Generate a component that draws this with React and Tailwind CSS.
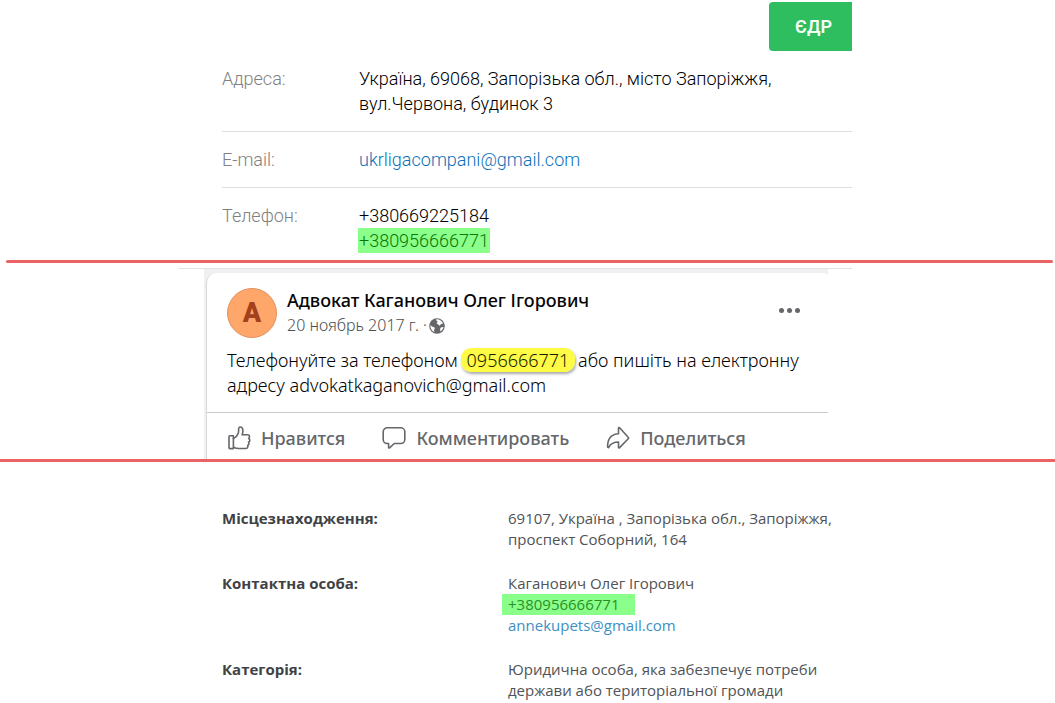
import clsx from "clsx";

// Red separator between the three sources
function Divider({ inset }) {
  return (
    <div
      className={clsx("h-[3px] bg-[#ea6262]", inset && "ml-[6px] mr-[2px] rounded-full")}
    />
  );
}

function RegistryRow({ label, last, children }) {
  return (
    <div className={clsx("flex pt-[15px]", !last && "border-b border-[#dedede] pb-[15px]")}>
      <dt className="w-[137px] shrink-0 text-[#808080]">{label}</dt>
      <dd className="text-black">{children}</dd>
    </div>
  );
}

function ContactRow({ label, children }) {
  return (
    <div className="flex">
      <dt className="w-[286px] shrink-0 font-bold text-[#3f4245]">{label}</dt>
      <dd className="text-[#505356]">{children}</dd>
    </div>
  );
}

function LikeIcon() {
  return (
    <svg viewBox="0 0 24 24" className="size-6" fill="none" stroke="#65676b" strokeWidth="1.6" strokeLinejoin="round" strokeLinecap="round">
      <path d="M2.8 9.8h3.600v12.800H2.800a.8.8 0 0 1-.8-.8V10.600a.8.8 0 0 1 .8-.8z" />
      <path d="M6.4 12.600C8.900 11.200 10.600 9.400 11.300 7.200c.5-1.600.2-3.200.4-4.700C11.800 1.500 12.400 1 13.200 1c1.700 0 2.700 1.600 2.700 3.700 0 1.500-.3 2.800-.8 4.100h5.200c1.300 0 2.200.9 2.200 2 0 .7-.3 1.300-.8 1.700.7.400 1.100 1 1.100 1.700 0 .9-.5 1.600-1.300 1.900.4.400.6.900.5 1.500-.1.800-.6 1.400-1.300 1.700.2.400.3.800.2 1.300-.2 1.200-1.100 1.900-2.300 1.900h-6.800c-2.100 0-3.500-.4-5.200-1.300" />
    </svg>
  );
}

function CommentIcon() {
  return (
    <svg viewBox="0 0 24 24" className="size-6" fill="none" stroke="#65676b" strokeWidth="1.6" strokeLinejoin="round">
      <path d="M5.200 1.800h13.600a4 4 0 0 1 4 4v7.700a4 4 0 0 1-4 4h-6.600l-4.600 4.300c-.5.4-1 .2-1-.4v-3.900H5.200a4 4 0 0 1-4-4V5.800a4 4 0 0 1 4-4z" />
    </svg>
  );
}

function ShareIcon() {
  return (
    <svg viewBox="0 0 24 24" className="size-6" fill="none" stroke="#65676b" strokeWidth="1.6" strokeLinejoin="round">
      <path d="M12.500 2.200v5.600C6 8.200 1.600 12.500 1.600 20.800c0 .9.900 1.100 1.300.3 1.900-3.600 5-5.100 9.600-5.100v5.200c0 .7.600.9 1.100.4l8.600-8.800c.5-.5.500-1 0-1.500l-8.600-9.500c-.5-.5-1.100-.3-1.100.4z" />
    </svg>
  );
}

function GlobeIcon() {
  return (
    <svg viewBox="0 0 16 16" className="size-4">
      <circle cx="8" cy="8" r="7.800" fill="#65676b" />
      <path d="M7.900 1.300c2.800 0 5.200 1.700 6.200 4.200-.6.500-1.200.2-1.900.5-.9.400-.6 1.400-1.500 1.500-1 .1-1-.9-1.800-1.300-.6-.3-1.100-.3-1.200-.9-.1-.7.800-.8.900-1.500.1-.9-1.200-.9-1.500-1.500-.2-.5.200-.9.800-1z" fill="#fff" />
      <path d="M1.300 7.300c.9.400 1.200 1.200 2.300 1.500 1 .3 2 .4 2.200 1.300.2.900-.7 1.300-.7 2.100 0 .7.500 1.200.2 1.700-2.400-.9-4.100-3.400-4-6.600z" fill="#fff" />
      <path d="M12 9.600c.8-.7 1.700-.9 2.500-.5-.4 1.800-1.400 3.300-2.900 4.300-.5-.4-.3-1-.4-1.700-.1-.8 0-1.500.8-2.100z" fill="#fff" />
    </svg>
  );
}

const actions = [
  { name: "Нравится", Icon: LikeIcon },
  { name: "Комментировать", Icon: CommentIcon },
  { name: "Поделиться", Icon: ShareIcon },
];

export default function App() {
  return (
    <main className="bg-white">
      {/* Registry card */}
      <section className="ml-[222px] max-w-[630px] pt-[2px] pb-[7px] font-['Roboto',sans-serif] text-[18px] font-light leading-[25px]">
        <div className="flex justify-end">
          <button className="h-[49px] w-[83px] rounded-l-[4px] bg-[#2ebd5f] pl-[6px] font-semibold text-[#f4fff8]">
            ЄДР
          </button>
        </div>
        <dl>
          <RegistryRow label="Адреса:">
            Україна, 69068, Запорізька обл., місто Запоріжжя,
            <br />
            вул.Червона, будинок 3
          </RegistryRow>
          <RegistryRow label="E-mail:">
            <a href="mailto:ukrligacompani@gmail.com" className="text-[#0870b8]">
              ukrligacompani@gmail.com
            </a>
          </RegistryRow>
          <RegistryRow label="Телефон:" last>
            +380669225184
            <br />
            <mark className="-ml-px inline-block bg-[#8aff8a] px-px text-[#087808]">
              +380956666771
            </mark>
          </RegistryRow>
        </dl>
      </section>

      <Divider inset />

      {/* Post */}
      <section className="ml-[178px] max-w-[674px] pt-[5px] font-['Noto_Sans',sans-serif]">
        <div className="h-px bg-[#e2e2e4]" />
        <div className="ml-[26px] mr-[24px] bg-[#f0f0f2] pl-[2px] pt-[4px]">
          <article className="rounded-tl-[10px] rounded-tr-[4px] border-l border-[#d8d9dc] bg-white pt-[15px]">
            <header className="flex items-start gap-[10px] pl-5 pr-7">
              <div className="flex size-[50px] items-center justify-center rounded-full border border-[#e0935f] bg-[#ffa76b] font-['Roboto',sans-serif] text-[27px] font-black leading-none text-[#a5401c]">
                A
              </div>
              <div className="flex-1">
                <h2 className="text-[18px] font-medium leading-[25px] text-[#050505]">
                  Адвокат Каганович Олег Ігорович
                </h2>
                <p className="flex items-center gap-[2px] text-[16px] font-light leading-[25px] text-[#4c4e52]">
                  20 ноябрь 2017 г. · <GlobeIcon />
                </p>
              </div>
              <button aria-label="Ещё" className="mt-[20px] flex gap-[3px]">
                <span className="size-[5px] rounded-full bg-[#65676b]" />
                <span className="size-[5px] rounded-full bg-[#65676b]" />
                <span className="size-[5px] rounded-full bg-[#65676b]" />
              </button>
            </header>
            <p className="px-5 pt-[10px] pb-[14px] text-[18px] font-light leading-[25px] text-black">
              Телефонуйте за телефоном{" "}
              <mark className="-mx-[2px] rounded-[10px] bg-[#fdfb45] px-[6px] text-[#1b1b00] shadow-[1px_2px_3px_rgba(0,0,0,0.35)]">
                0956666771
              </mark>{" "}
              або пишіть на електронну
              <br />
              адресу advokatkaganovich@gmail.com
            </p>
            <footer className="flex gap-[37px] border-t border-[#c9cacc] pl-5 pt-[13px] pb-[9px]">
              {actions.map(({ name, Icon }) => (
                <button
                  key={name}
                  className="flex items-center gap-[10px] text-[18px] font-medium leading-6 text-[#65676b]"
                >
                  <Icon />
                  {name}
                </button>
              ))}
            </footer>
          </article>
        </div>
      </section>

      <Divider />

      {/* Contacts */}
      <dl className="ml-[222px] flex max-w-[630px] flex-col gap-[23px] pt-[46px] font-['Open_Sans',sans-serif] text-[15px] leading-[21px]">
        <ContactRow label="Місцезнаходження:">
          69107, Україна , Запорізька обл., Запоріжжя,
          <br />
          проспект Соборний, 164
        </ContactRow>
        <ContactRow label="Контактна особа:">
          Каганович Олег Ігорович
          <br />
          <mark className="-ml-[6px] block w-[133px] bg-[#8aff8a] pl-[6px] text-[#2a8f2a]">
            +380956666771
          </mark>
          <a href="mailto:annekupets@gmail.com" className="text-[#3d8fc4]">
            annekupets@gmail.com
          </a>
        </ContactRow>
        <ContactRow label="Категорія:">
          Юридична особа, яка забезпечує потреби
          <br />
          держави або територіальної громади
        </ContactRow>
      </dl>
    </main>
  );
}
